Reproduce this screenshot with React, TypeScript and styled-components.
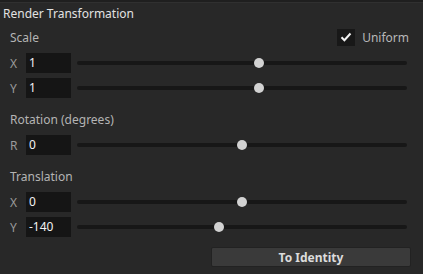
import React from "react";
import styled, { createGlobalStyle } from "styled-components";

const GlobalStyle = createGlobalStyle`
  html, body {
    margin: 0;
    padding: 0;
    background: #282828;
  }
  body {
    font-family: "Noto Sans", "Open Sans", sans-serif;
  }
`;

type SliderRow = { axis: string; value: string; pos: number };

const groups: { title: string; rows: SliderRow[]; uniform?: boolean }[] = [
  {
    title: "Scale",
    uniform: true,
    rows: [
      { axis: "X", value: "1", pos: 0.553 },
      { axis: "Y", value: "1", pos: 0.553 },
    ],
  },
  {
    title: "Rotation (degrees)",
    rows: [{ axis: "R", value: "0", pos: 0.5 }],
  },
  {
    title: "Translation",
    rows: [
      { axis: "X", value: "0", pos: 0.5 },
      { axis: "Y", value: "-140", pos: 0.43 },
    ],
  },
];

const App = () => {
  return (
    <Panel>
      <GlobalStyle />
      <Header>Render Transformation</Header>
      <Body>
        {groups.map((g) => (
          <Group key={g.title}>
            <GroupHead>
              <GroupTitle>{g.title}</GroupTitle>
              {g.uniform && (
                <CheckLabel>
                  <CheckBox>
                    <svg width="12" height="10" viewBox="0 0 12 10">
                      <path
                        d="M1.5 5.2 L4.4 8.2 L10.5 1.5"
                        fill="none"
                        stroke="#f2f2f2"
                        strokeWidth="2"
                      />
                    </svg>
                  </CheckBox>
                  Uniform
                </CheckLabel>
              )}
            </GroupHead>
            {g.rows.map((r) => (
              <Row key={r.axis}>
                <Axis>{r.axis}</Axis>
                <ValueBox>{r.value}</ValueBox>
                <Track>
                  <Thumb style={{ left: `calc(${r.pos * 100}% - 5px)` }} />
                </Track>
              </Row>
            ))}
          </Group>
        ))}
        <Footer>
          <Button>To Identity</Button>
        </Footer>
      </Body>
    </Panel>
  );
};

const Panel = styled.div`
  width: 423px;
  height: 274px;
  background: #282828;
  border-top: 2px solid #1f1f1f;
  box-sizing: border-box;
  overflow: hidden;
`;

const Header = styled.div`
  height: 20px;
  line-height: 22px;
  padding-left: 3px;
  font-size: 12px;
  color: #e2e2e2;
  border-top: 1px solid #303030;
`;

const Body = styled.div`
  display: flex;
  flex-direction: column;
  padding: 3px 16px 0 10px;
`;

const Group = styled.div`
  display: flex;
  flex-direction: column;
  gap: 5px;
  margin-bottom: 10px;
`;

const GroupHead = styled.div`
  display: flex;
  align-items: center;
  justify-content: space-between;
  height: 22px;
`;

const GroupTitle = styled.span`
  font-size: 12px;
  color: #b4b4b4;
`;

const CheckLabel = styled.label`
  display: flex;
  align-items: center;
  gap: 7px;
  font-size: 12px;
  color: #b8b8b8;
  margin-right: -2px;
`;

const CheckBox = styled.span`
  width: 18px;
  height: 17px;
  background: #181818;
  display: flex;
  align-items: center;
  justify-content: center;
`;

const Row = styled.div`
  display: flex;
  align-items: center;
  height: 20px;
`;

const Axis = styled.span`
  width: 16px;
  font-size: 12px;
  color: #9a9a9a;
`;

const ValueBox = styled.div`
  width: 45px;
  height: 20px;
  line-height: 20px;
  box-sizing: border-box;
  padding-left: 3px;
  background: #151515;
  color: #f2f2f2;
  font-size: 12px;
`;

const Track = styled.div`
  position: relative;
  flex: 1;
  height: 4px;
  margin-left: 6px;
  border-radius: 2px;
  background: #171717;
`;

const Thumb = styled.div`
  position: absolute;
  top: -3px;
  width: 10px;
  height: 10px;
  border-radius: 50%;
  background: #d2d2d2;
`;

const Footer = styled.div`
  display: flex;
  justify-content: flex-end;
  margin-right: -4px;
`;

const Button = styled.button`
  width: 200px;
  height: 20px;
  padding: 0;
  border: 1px solid #222;
  border-radius: 2px;
  background: #3a3a3a;
  color: #dcdcdc;
  font-family: "Noto Sans", "Open Sans", sans-serif;
  font-size: 12px;
  font-weight: 700;
`;

export default App;
